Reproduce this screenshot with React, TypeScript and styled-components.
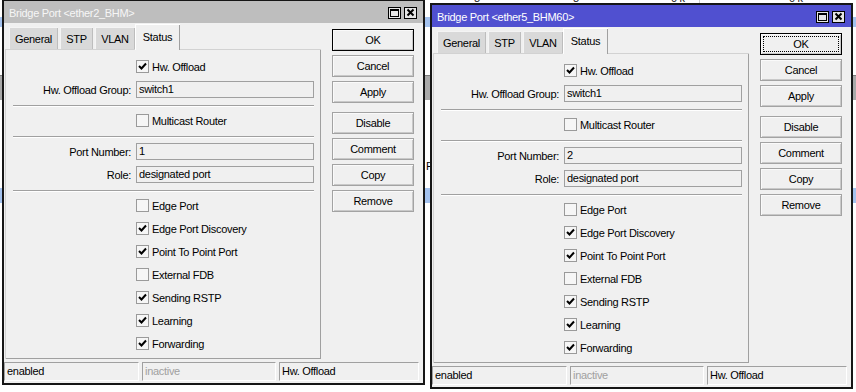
import React from "react";
import styled, { createGlobalStyle, css } from "styled-components";

const Global = createGlobalStyle`
  html, body { margin: 0; padding: 0; background: #fff; }
  body {
    font-family: "Liberation Sans", Arial, sans-serif;
    font-size: 11px;
    letter-spacing: -0.3px;
    color: #000;
  }
  * { box-sizing: border-box; }
`;

const Desktop = styled.div`
  position: relative;
  width: 856px;
  height: 392px;
  overflow: hidden;
  background: #fff;
`;

/* ---------- background list (behind windows) ---------- */
const BgList = styled.div`
  display: flex;
  flex-direction: column;
`;

const BgRow = styled.div<{ $h: number; $bg?: string; $line?: boolean }>`
  height: ${(p) => p.$h}px;
  background: ${(p) => p.$bg ?? "#fff"};
  ${(p) => p.$line && css`border-top: 1px solid #7a7a7a;`}
  overflow: hidden;
  display: flex;
  align-items: center;
`;

const TopCells = styled.div`
  display: grid;
  grid-template-columns: 99px 98px 28px 90px 40px;
  padding-left: 474px;
  margin-top: -14px;
  line-height: 12px;
  color: #222;
`;

const TopCell = styled.span<{ $rule?: boolean }>`
  ${(p) => p.$rule && css`border-left: 1px solid #cfcfcf; height: 20px;`}
`;

const HeaderText = styled.span`
  padding-left: 426px;
  color: #000;
`;

/* ---------- window ---------- */
const WindowFrame = styled.div<{ $x: number; $y: number }>`
  position: absolute;
  left: ${(p) => p.$x}px;
  top: ${(p) => p.$y}px;
  width: 423px;
  height: 386px;
  border: 2px solid #161616;
  background: #f0f0f0;
  display: flex;
  flex-direction: column;
`;

const TitleBar = styled.div<{ $active: boolean }>`
  height: 22px;
  flex: none;
  background: ${(p) => (p.$active ? "#5050d0" : "#bebebe")};
  color: ${(p) => (p.$active ? "#ffffff" : "#f6f6f6")};
  display: flex;
  align-items: center;
  padding: 2px 6px 0 5px;
`;

const TitleText = styled.div`
  flex: 1;
  white-space: nowrap;
`;

const TitleButtons = styled.div`
  display: flex;
  gap: 3px;
`;

const TitleBtn = styled.div`
  width: 13px;
  height: 12px;
  border: 1px solid #000;
  background: #e6e6e6;
  display: flex;
  align-items: center;
  justify-content: center;
`;

const Body = styled.div`
  flex: 1;
  display: flex;
  flex-direction: column;
  padding: 1px 0 2px 0;
`;

const Main = styled.div`
  height: 335px;
  display: flex;
`;

const LeftCol = styled.div`
  width: 316px;
  margin-left: 1px;
  display: flex;
  flex-direction: column;
`;

const TabStrip = styled.div`
  height: 25px;
  display: flex;
  align-items: flex-end;
  gap: 2px;
  padding-left: 4px;
`;

const Tab = styled.div<{ $w: number; $active?: boolean }>`
  width: ${(p) => p.$w}px;
  display: flex;
  align-items: center;
  justify-content: center;
  padding-top: 1px;
  position: relative;
  ${(p) =>
    p.$active
      ? css`
          height: 26px;
          margin-bottom: -1px;
          margin-left: -2px;
          background: #f0f0f0;
          z-index: 1;
          padding-bottom: 2px;
          box-shadow: inset 1px 1px 0 #ffffff, inset -1px 0 0 #a0a0a0;
        `
      : css`
          height: 22px;
          background: #d9d9d9;
          box-shadow: inset 1px 1px 0 #f4f4f4, inset -1px 0 0 #bdbdbd;
        `}
`;

const Panel = styled.div`
  height: 310px;
  background: #f0f0f0;
  box-shadow: inset 1px 1px 0 #d2d2d2, inset -1px -1px 0 #a0a0a0;
  display: flex;
  flex-direction: column;
  padding-top: 6px;
`;

const Row = styled.div<{ $gapTop?: boolean; $check?: boolean }>`
  height: 23px;
  flex: none;
  display: flex;
  align-items: center;
  ${(p) => p.$gapTop && css`margin-top: 2px;`}
  ${(p) => p.$check && css`padding-left: 131px;`}
`;

const Label = styled.div`
  width: 126px;
  text-align: right;
  margin-right: 5px;
  white-space: nowrap;
`;

const Field = styled.div`
  width: 178px;
  height: 17px;
  border: 1px solid #a0a0a0;
  background: #f0f0f0;
  padding-left: 2px;
  line-height: 15px;
  white-space: nowrap;
`;

const Separator = styled.div`
  height: 2px;
  flex: none;
  margin: 4px 7px 0 8px;
  border-top: 1px solid #a0a0a0;
  border-bottom: 1px solid #ffffff;
`;

const Box = styled.div`
  width: 13px;
  height: 13px;
  border: 1px solid #9a9a9a;
  background: #f6f6f6;
  margin-right: 3px;
  display: flex;
  align-items: center;
  justify-content: center;
`;

const ButtonCol = styled.div`
  width: 82px;
  margin-left: 11px;
  padding-top: 5px;
  display: flex;
  flex-direction: column;
  gap: 4px;
`;

const Button = styled.div<{ $default?: boolean; $focused?: boolean; $spaced?: boolean }>`
  height: 22px;
  flex: none;
  position: relative;
  background: #f0f0f0;
  border: 1px solid ${(p) => (p.$default ? "#000" : "#a3a3a3")};
  box-shadow: inset 1px 1px 0 #fafafa, inset -1px -1px 0 #c9c9c9;
  display: flex;
  align-items: center;
  justify-content: center;
  ${(p) => p.$spaced && css`margin-top: 5px;`}
  ${(p) =>
    p.$focused &&
    css`
      &::after {
        content: "";
        position: absolute;
        inset: 2px;
        border: 1px dotted #000;
      }
    `}
`;

const StatusBar = styled.div`
  margin-top: 3px;
  height: 19px;
  display: flex;
  gap: 3px;
`;

const StatusCell = styled.div<{ $w: number; $muted?: boolean }>`
  width: ${(p) => p.$w}px;
  height: 19px;
  border-top: 1px solid #a0a0a0;
  border-left: 1px solid #a0a0a0;
  border-bottom: 1px solid #ffffff;
  border-right: 1px solid #ffffff;
  padding-left: 2px;
  line-height: 17px;
  color: ${(p) => (p.$muted ? "#a0a0a0" : "#000")};
  white-space: nowrap;
`;

/* ---------- icons ---------- */
const MaxIcon = () => (
  <svg width="11" height="10" viewBox="0 0 11 10">
    <rect x="1.5" y="1.5" width="8" height="7" fill="none" stroke="#000" strokeWidth="1" />
    <line x1="1" y1="2" x2="10" y2="2" stroke="#000" strokeWidth="2" />
  </svg>
);

const CloseIcon = () => (
  <svg width="11" height="10" viewBox="0 0 11 10">
    <path d="M2.5 1.5 L8.5 7.5 M8.5 1.5 L2.5 7.5" stroke="#000" strokeWidth="2" fill="none" />
  </svg>
);

const CheckMark = () => (
  <svg width="11" height="11" viewBox="0 0 11 11">
    <path d="M2 5 L4.5 7.5 L9 2.5" stroke="#000" strokeWidth="2" fill="none" />
  </svg>
);

const Check = ({ on, label }: { on: boolean; label: string }) => (
  <>
    <Box>{on && <CheckMark />}</Box>
    <span>{label}</span>
  </>
);

const tabs = [
  { label: "General", w: 49 },
  { label: "STP", w: 33 },
  { label: "VLAN", w: 40 },
  { label: "Status", w: 45, active: true },
];

const flags: [string, boolean][] = [
  ["Edge Port", false],
  ["Edge Port Discovery", true],
  ["Point To Point Port", true],
  ["External FDB", false],
  ["Sending RSTP", true],
  ["Learning", true],
  ["Forwarding", true],
];

const buttons = ["OK", "Cancel", "Apply", "Disable", "Comment", "Copy", "Remove"];

type WinProps = { x: number; y: number; title: string; port: string; active: boolean };

const BridgeWindow = ({ x, y, title, port, active }: WinProps) => (
  <WindowFrame $x={x} $y={y}>
    <TitleBar $active={active}>
      <TitleText>{title}</TitleText>
      <TitleButtons>
        <TitleBtn>
          <MaxIcon />
        </TitleBtn>
        <TitleBtn>
          <CloseIcon />
        </TitleBtn>
      </TitleButtons>
    </TitleBar>
    <Body>
      <Main>
        <LeftCol>
          <TabStrip>
            {tabs.map((t) => (
              <Tab key={t.label} $w={t.w} $active={t.active}>
                {t.label}
              </Tab>
            ))}
          </TabStrip>
          <Panel>
            <Row $check>
              <Check on label="Hw. Offload" />
            </Row>
            <Row>
              <Label>Hw. Offload Group:</Label>
              <Field>switch1</Field>
            </Row>
            <Separator />
            <Row $check $gapTop>
              <Check on={false} label="Multicast Router" />
            </Row>
            <Separator />
            <Row $gapTop>
              <Label>Port Number:</Label>
              <Field>{port}</Field>
            </Row>
            <Row>
              <Label>Role:</Label>
              <Field>designated port</Field>
            </Row>
            <Separator />
            {flags.map(([label, on], i) => (
              <Row key={label} $check $gapTop={i === 0}>
                <Check on={on} label={label} />
              </Row>
            ))}
          </Panel>
        </LeftCol>
        <ButtonCol>
          {buttons.map((b) => (
            <Button
              key={b}
              $default={b === "OK"}
              $focused={b === "OK" && active}
              $spaced={b === "Disable"}
            >
              {b}
            </Button>
          ))}
        </ButtonCol>
      </Main>
      <StatusBar>
        <StatusCell $w={135}>enabled</StatusCell>
        <StatusCell $w={134} $muted>
          inactive
        </StatusCell>
        <StatusCell $w={140}>Hw. Offload</StatusCell>
      </StatusBar>
    </Body>
  </WindowFrame>
);

export default function App() {
  return (
    <Desktop>
      <Global />
      <BgList>
        <BgRow $h={17}>
          <TopCells>
            <TopCell>8</TopCell>
            <TopCell>8</TopCell>
            <TopCell>0 k</TopCell>
            <TopCell $rule />
            <TopCell>0 k</TopCell>
          </TopCells>
        </BgRow>
        <BgRow $h={10} $bg="#a4c2ee" />
        <BgRow $h={48} />
        <BgRow $h={25} $bg="#a9a9a9" $line />
        <BgRow $h={58} />
        <BgRow $h={15}>
          <HeaderText>F</HeaderText>
        </BgRow>
        <BgRow $h={15} />
        <BgRow $h={15} $bg="#a4c2ee" />
        <BgRow $h={189} />
      </BgList>
      <BridgeWindow x={2} y={-1} title="Bridge Port <ether2_BHM>" port="1" active={false} />
      <BridgeWindow x={430} y={3} title="Bridge Port <ether5_BHM60>" port="2" active />
    </Desktop>
  );
}
